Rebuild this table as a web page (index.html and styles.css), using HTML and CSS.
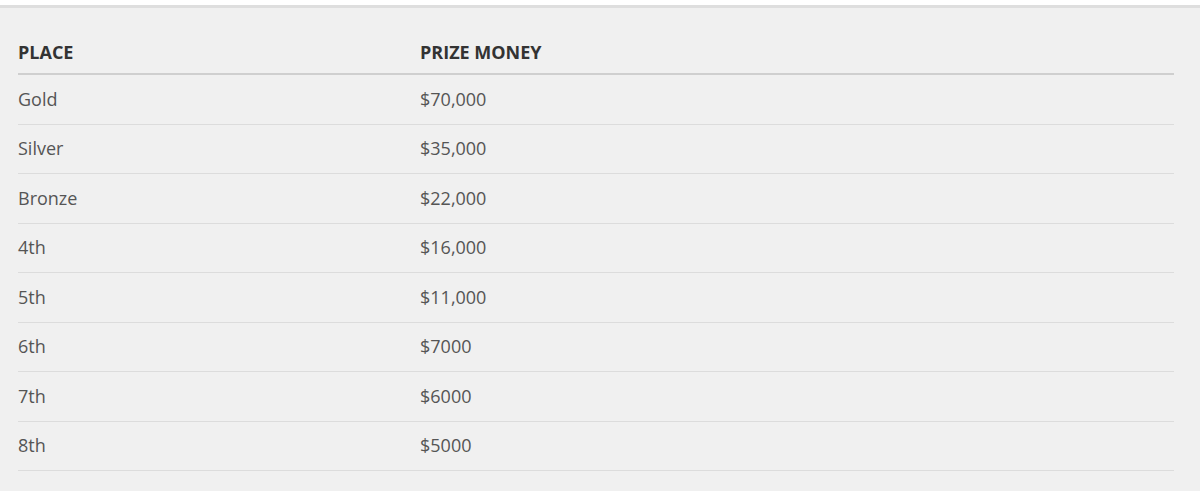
FILE: index.html
```html
<!DOCTYPE html>
<html lang="en">
<head>
<meta charset="utf-8">
<title>Prize Money</title>
<link rel="stylesheet" href="styles.css">
</head>
<body>
<div class="topbar"></div>
<section class="panel">
  <table class="prizes">
    <thead>
      <tr><th class="col-place">PLACE</th><th>PRIZE MONEY</th></tr>
    </thead>
    <tbody>
      <tr><td>Gold</td><td>$70,000</td></tr>
      <tr><td>Silver</td><td>$35,000</td></tr>
      <tr><td>Bronze</td><td>$22,000</td></tr>
      <tr><td>4th</td><td>$16,000</td></tr>
      <tr><td>5th</td><td>$11,000</td></tr>
      <tr><td>6th</td><td>$7000</td></tr>
      <tr><td>7th</td><td>$6000</td></tr>
      <tr><td>8th</td><td>$5000</td></tr>
    </tbody>
  </table>
</section>
</body>
</html>
```
FILE: styles.css
```css
html, body {
  margin: 0;
  padding: 0;
  background: #f0f0f0;
  height: 100%;
  overflow: hidden;
}
body {
  font-family: "Open Sans", "Liberation Sans", sans-serif;
  color: #555;
}
.topbar {
  height: 5px;
  background: #fff;
  border-bottom: 3px solid #dedede;
}
.panel {
  padding: 23px 26px 0 18px;
}
.prizes {
  width: 100%;
  border-collapse: collapse;
  font-size: 18px;
  line-height: 27px;
}
.prizes th {
  text-align: left;
  font-weight: 700;
  color: #333;
  padding: 7.5px 0;
  border-bottom: 2px solid #cfcfcf;
}
.prizes .col-place {
  width: 402px;
}
.prizes td {
  padding: 10.75px 0;
  border-bottom: 1px solid #dcdcdc;
}
```
